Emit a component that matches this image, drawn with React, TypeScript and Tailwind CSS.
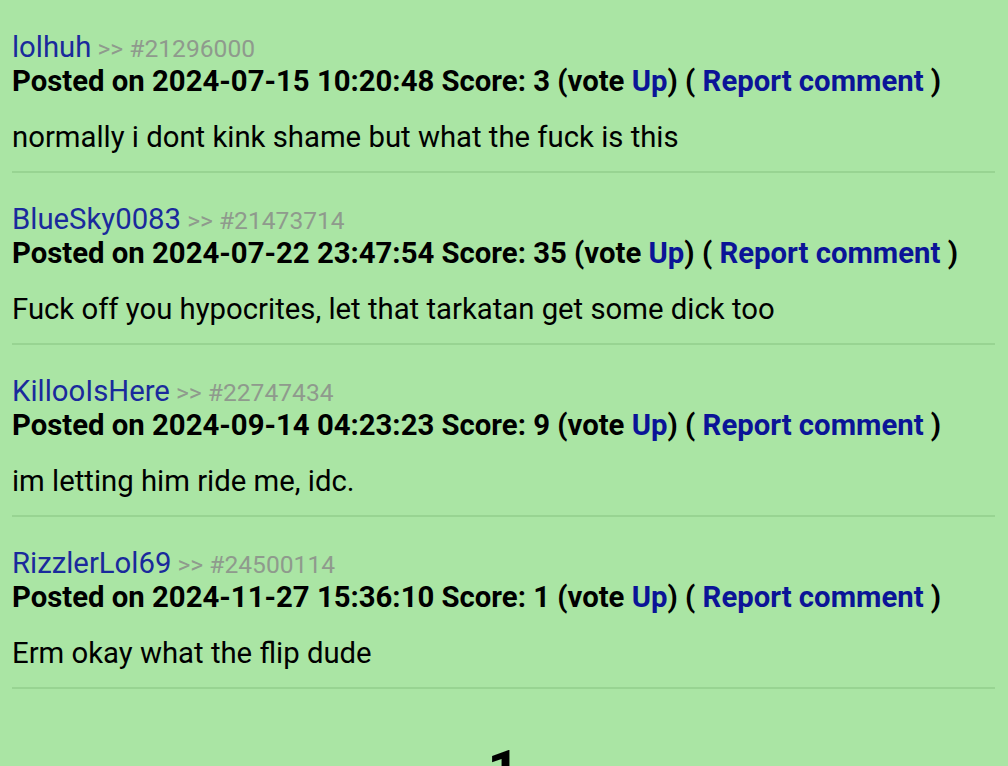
import React from "react";

const comments = [
  { user: "lolhuh", id: "21296000", date: "2024-07-15 10:20:48", score: "3", body: "normally i dont kink shame but what the fuck is this" },
  { user: "BlueSky0083", id: "21473714", date: "2024-07-22 23:47:54", score: "35", body: "Fuck off you hypocrites, let that tarkatan get some dick too" },
  { user: "KillooIsHere", id: "22747434", date: "2024-09-14 04:23:23", score: "9", body: "im letting him ride me, idc." },
  { user: "RizzlerLol69", id: "24500114", date: "2024-11-27 15:36:10", score: "1", body: "Erm okay what the flip dude" },
];

export default function App() {
  return (
    <div className="w-[1008px] h-[766px] overflow-hidden bg-[#aae5a4] text-black" style={{ fontFamily: "Roboto, 'Noto Sans', sans-serif" }}>
      <div className="pl-[12px] pr-[13px] pt-[30px]">
        {comments.map((c) => (
          <div key={c.id} className="border-b-[2px] border-[#98d492] pb-[17px] mb-[29px]">
            <div className="h-[34px] leading-[34px] whitespace-nowrap">
              <span className="text-[29.3px] text-[#1a2a9c]">{c.user}</span>
              <span className="text-[24.6px] text-[#8f9a8d]"> &gt;&gt; #{c.id}</span>
            </div>
            <div className="h-[34px] leading-[34px] text-[29.3px] font-bold whitespace-nowrap">
              Posted on {c.date} Score: {c.score} (vote <span className="text-[#0b1497]">Up</span>) ({" "}
              <span className="text-[#0b1497]">Report comment</span> )
            </div>
            <div className="mt-[22px] h-[34px] leading-[34px] text-[29.3px] whitespace-nowrap">{c.body}</div>
          </div>
        ))}
        <div className="pt-[25px] text-center text-[56px] font-bold leading-none">1</div>
      </div>
    </div>
  );
}
